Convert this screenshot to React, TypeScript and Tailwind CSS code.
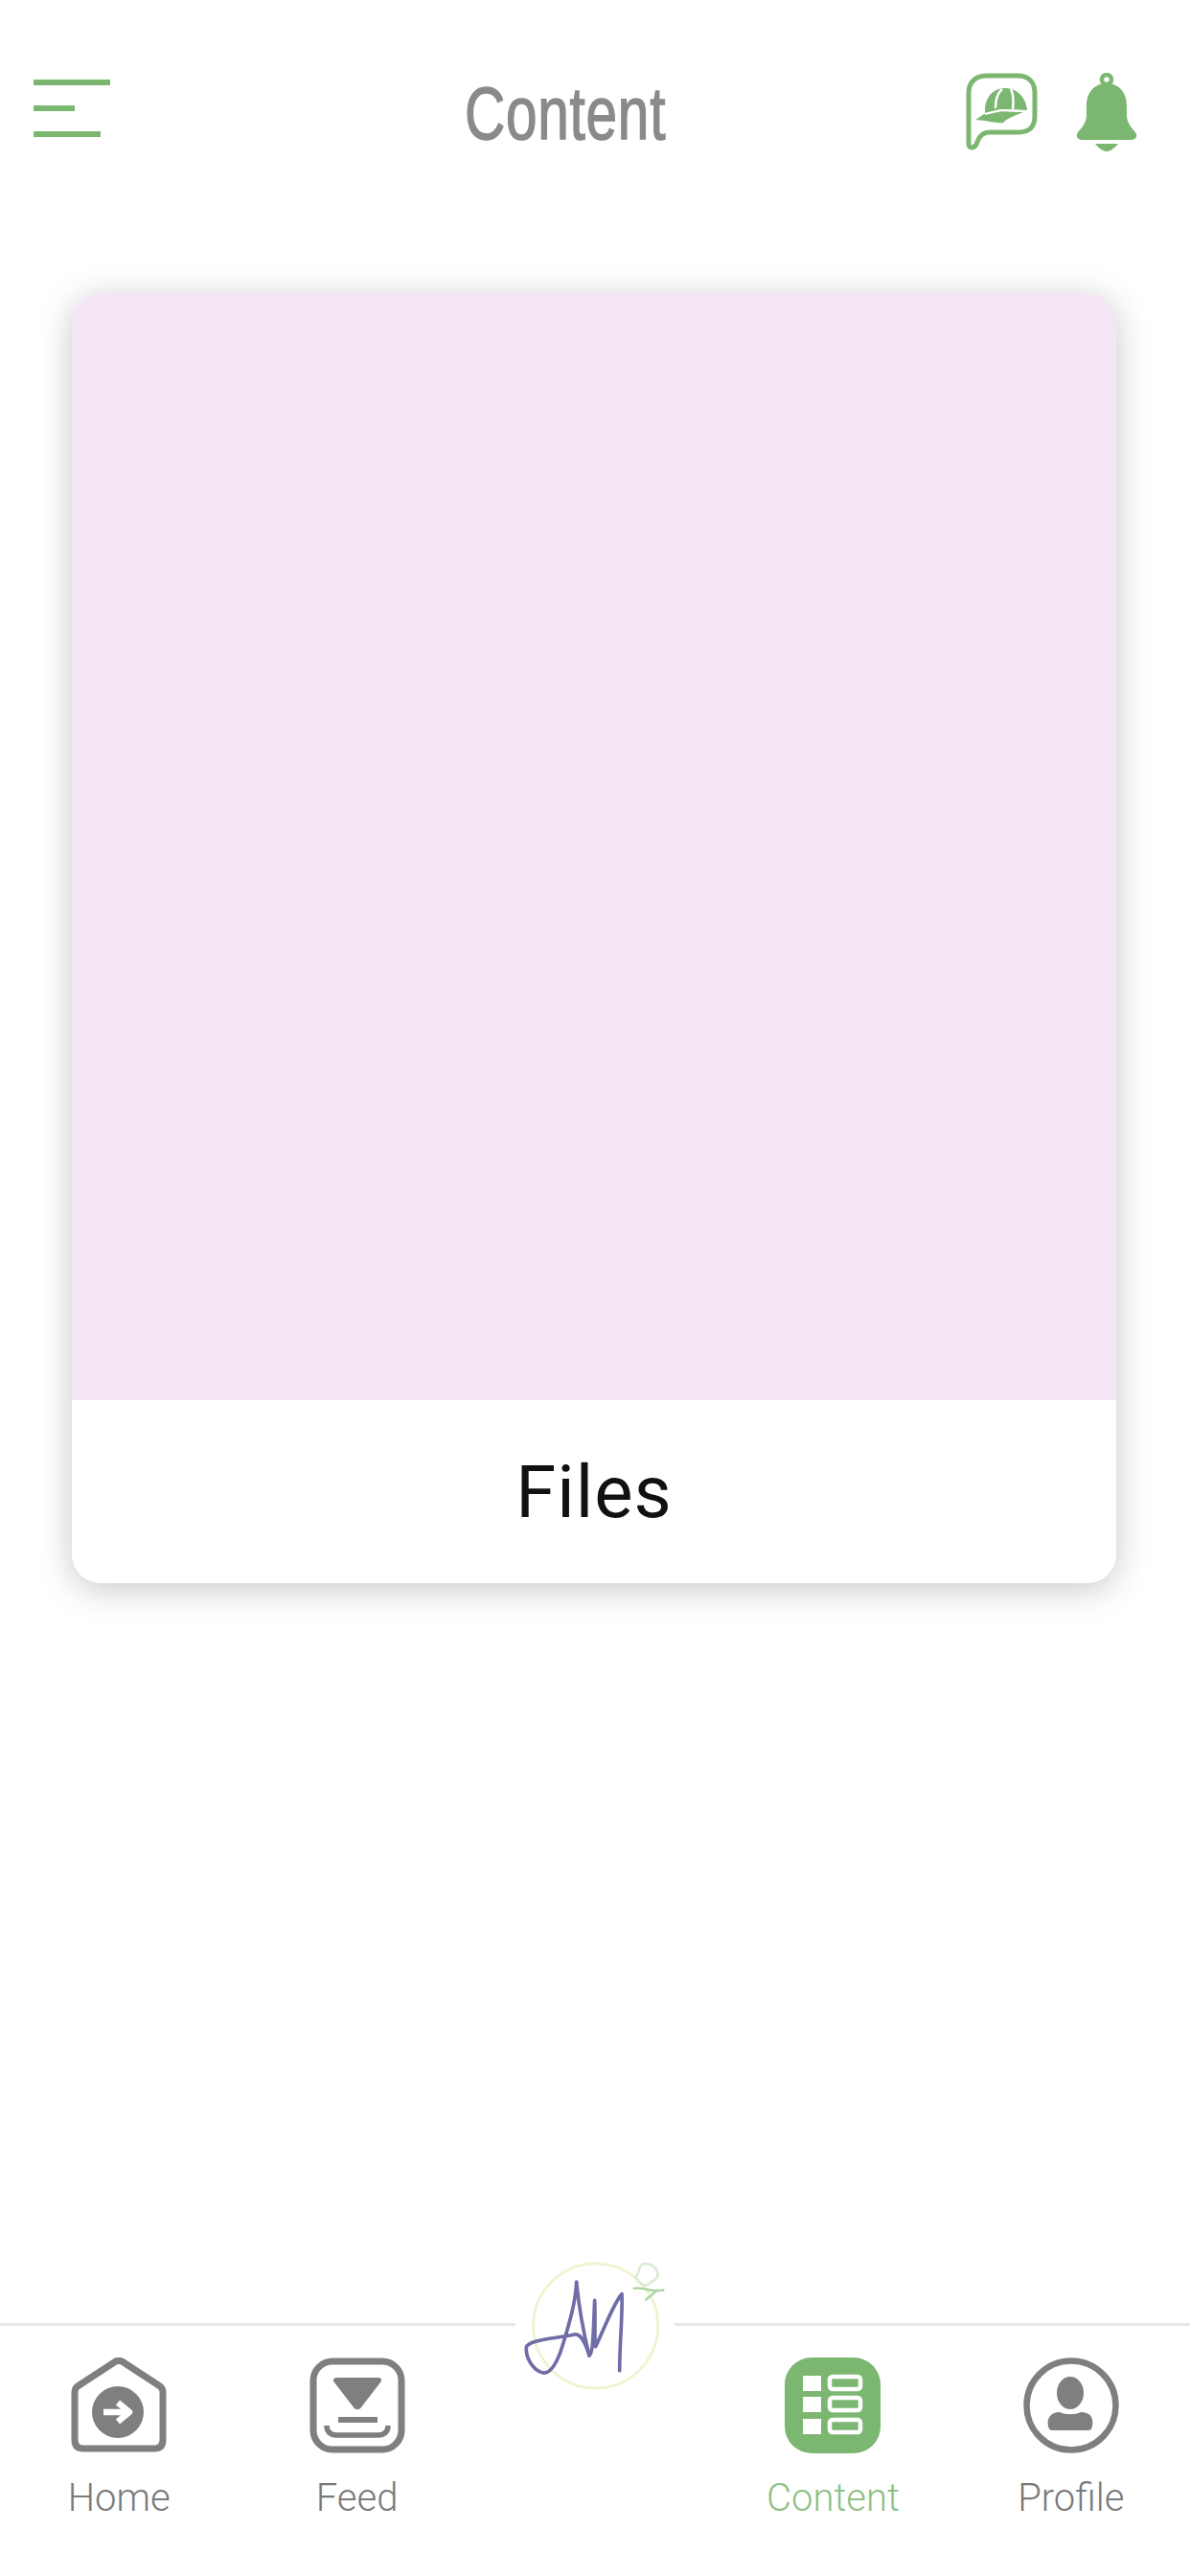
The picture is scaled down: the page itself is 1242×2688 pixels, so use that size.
import React from "react";

const G = "#7cb771";
const K = "#7f7f7f";

function MenuIcon() {
  return (
    <div className="flex flex-col gap-[21px] w-[80px] mt-[7px]">
      <div className="h-[6px] w-[80px] bg-[#7cb771]" />
      <div className="h-[6px] w-[43px] bg-[#7cb771]" />
      <div className="h-[6px] w-[70px] bg-[#7cb771]" />
    </div>
  );
}

function ChatCap() {
  return (
    <svg width="75" height="82" viewBox="0 0 75 82" fill="none">
      <path
        d="M22 3H54C66 3 72 10 72 21V45C72 57 66 62 54 62H25C18 62 14 66 12 72C10 79 3 80 3 74V21C3 10 10 3 22 3Z"
        stroke={G}
        strokeWidth="5"
      />
      <path d="M20 40C20 26 28 16 41 16C54 16 63 26 64 39L36 38L20 42Z" fill={G} />
      <path d="M10 49L19 43L37 40L60 41C50 45 44 47 39 52C32 53 26 50 10 49Z" fill={G} />
      <path d="M31 37C31 27 34 20 38 17M49 38C50 29 50 22 47 17" stroke="white" strokeWidth="2.5" />
      <path d="M20 43L37 39L62 40" stroke="white" strokeWidth="2" />
    </svg>
  );
}

function Bell() {
  return (
    <svg width="64" height="82" viewBox="0 0 64 82" fill="none">
      <circle cx="32" cy="7" r="5" stroke={G} strokeWidth="4.5" />
      <path
        d="M32 11C46 11 53 22 53 34V44C53 53 59 58 62 62C65 66 62 70 58 70H6C2 70 -1 66 2 62C5 58 11 53 11 44V34C11 22 18 11 32 11Z"
        fill={G}
      />
      <path d="M20 74H44C41 78 36 82 32 82C28 82 23 78 20 74Z" fill={G} />
    </svg>
  );
}

function HomeIcon() {
  return (
    <svg width="102" height="100" viewBox="0 0 102 100" fill="none">
      <path
        d="M47 4.500C49 3 53 3 55 4.500L94 30C96 31.500 97 33 97 36V86C97 92 94 95 88 95H14C8 95 5 92 5 86V36C5 33 6 31.500 8 30Z"
        stroke={K}
        strokeWidth="7"
        strokeLinejoin="round"
      />
      <circle cx="50" cy="57" r="27" fill={K} />
      <path d="M35 57H60M50 47L62 57L50 67" stroke="white" strokeWidth="6.500" strokeLinejoin="round" />
    </svg>
  );
}

function FeedIcon() {
  return (
    <svg width="100" height="100" viewBox="0 0 100 100" fill="none">
      <rect x="4" y="4" width="92" height="92" rx="20" stroke={K} strokeWidth="7" />
      <path d="M28 21C25 21 24 24 26 26L46 52C48 55 52 55 54 52L74 26C76 24 75 21 72 21Z" fill={K} />
      <path d="M30 65H71" stroke={K} strokeWidth="6" />
      <path d="M18 71C18 77 21 81 28 81H72C79 81 82 77 82 71" stroke={K} strokeWidth="5.500" />
    </svg>
  );
}

function ContentIcon() {
  const rows = [19, 41, 64];
  return (
    <svg width="100" height="100" viewBox="0 0 100 100" fill="none">
      <rect width="100" height="100" rx="28" fill={G} />
      {rows.map((y) => (
        <g key={y}>
          <rect x="19" y={y} width="19" height="16" fill="white" />
          <rect x="47" y={y + 1} width="32" height="13" rx="3" stroke="white" strokeWidth="4.500" />
        </g>
      ))}
    </svg>
  );
}

function ProfileIcon() {
  return (
    <svg width="100" height="100" viewBox="0 0 100 100" fill="none">
      <circle cx="50" cy="50" r="46.500" stroke={K} strokeWidth="6.500" />
      <ellipse cx="49" cy="37" rx="14" ry="17" fill={K} />
      <path d="M26 72C24 62 30 57 38 57C44 60 54 60 60 57C69 57 74 62 72 72C71 75 70 76 68 76H30C28 76 27 75 26 72Z" fill={K} />
    </svg>
  );
}

function Logo() {
  return (
    <svg width="240" height="180" viewBox="0 0 720 540" fill="none" className="block">
      <circle cx="365" cy="285" r="195" stroke="#f1f4d2" strokeWidth="9" />
      <path d="M510 92C530 85 558 100 560 125C560 140 540 145 530 155C515 165 500 150 490 132C505 120 495 105 510 92Z" fill="white" stroke="#dcebd6" strokeWidth="8" />
      <path d="M482 168C510 160 545 185 580 172M520 205L560 172" stroke="#a9d29f" strokeWidth="7" />
      <path
        d="M305 148C302 210 285 270 262 345C245 400 225 435 200 432C170 425 145 385 148 352C155 328 240 325 298 312C322 308 335 345 345 378"
        stroke="#6f6ca6"
        strokeWidth="11"
        strokeLinejoin="round"
        strokeLinecap="round"
      />
      <path
        d="M305 148C312 220 328 310 345 378C358 375 358 290 362 205C365 260 360 325 365 350C385 310 420 215 447 185C450 250 440 340 440 425"
        stroke="#6f6ca6"
        strokeWidth="11"
        strokeLinejoin="round"
        strokeLinecap="round"
      />
    </svg>
  );
}

function Tab({ icon, label, active }: { icon: React.ReactNode; label: string; active?: boolean }) {
  return (
    <div className="flex flex-col items-center">
      <div className="h-[100px] flex items-center justify-center">{icon}</div>
      <span
        className={`mt-[22px] text-[40px] leading-[50px] font-light font-['Roboto',sans-serif] ${
          active ? "text-[#8fbf86]" : "text-[#7a7a7a]"
        }`}
      >
        {label}
      </span>
    </div>
  );
}

export default function App() {
  return (
    <div className="relative w-[1242px] h-[2688px] bg-white flex flex-col overflow-hidden">
      <header className="h-[306px] shrink-0 flex items-start pl-[35px] pr-[55px] pt-[76px]">
        <MenuIcon />
        <h1 className="ml-[370px] text-[78px] leading-[84px] font-normal tracking-[1px] text-[#8a8a8a] origin-left scale-x-[0.75] [-webkit-text-stroke:1.5px_#8a8a8a] font-['Liberation_Sans',sans-serif]">
          Content
        </h1>
        <div className="ml-auto flex items-start gap-[40px]">
          <ChatCap />
          <Bell />
        </div>
      </header>

      <main className="flex-1 px-[75px]">
        <div className="w-[1090px] h-[1346px] rounded-[30px] bg-white overflow-hidden flex flex-col shadow-[0_6px_36px_rgba(0,0,0,0.22)]">
          <div className="h-[1155px] bg-[#f4e6f4]" />
          <div className="flex-1 flex items-center justify-center text-[76px] tracking-[1px] text-[#111] font-['Roboto',sans-serif]">
            Files
          </div>
        </div>
      </main>

      <nav className="relative shrink-0 h-[264px] border-t-[3px] border-[#e6e6e6] grid grid-cols-5 pt-[33px] items-start">
        <Tab icon={<HomeIcon />} label="Home" />
        <Tab icon={<FeedIcon />} label="Feed" />
        <div />
        <Tab icon={<ContentIcon />} label="Content" active />
        <Tab icon={<ProfileIcon />} label="Profile" />
        <div className="absolute left-[538px] top-[-10px] w-[166px] h-[20px] bg-white" />
        <div className="absolute left-[500px] top-[-95px]">
          <Logo />
        </div>
      </nav>
    </div>
  );
}
